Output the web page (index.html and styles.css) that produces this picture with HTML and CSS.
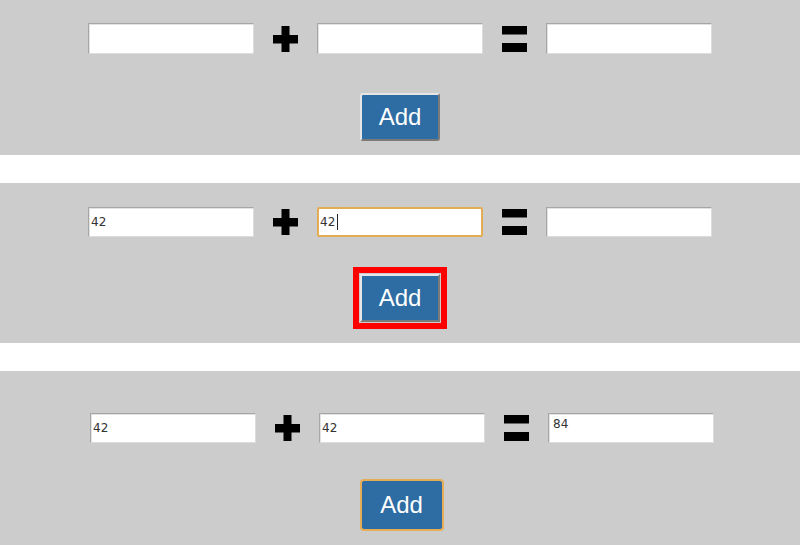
FILE: index.html
```html
<!DOCTYPE html>
<html>
<head>
<meta charset="utf-8">
<link rel="stylesheet" href="styles.css">
</head>
<body>
<div class="page">
  <section class="panel panel-1">
    <div class="row">
      <input class="field" type="text" value="">
      <svg class="op" viewBox="0 0 25 26" width="25" height="26"><path d="M8.5 0h8v9h8.5v8.5h-8.5v8.5h-8v-8.5h-8.5v-8.5h8.5z" fill="#000"/></svg>
      <input class="field" type="text" value="">
      <svg class="op" viewBox="0 0 25 26" width="25" height="26"><rect x="0" y="0" width="25" height="8.5" fill="#000"/><rect x="0" y="17" width="25" height="9" fill="#000"/></svg>
      <input class="field" type="text" value="">
    </div>
    <button class="btn">Add</button>
  </section>

  <section class="panel panel-2">
    <div class="row">
      <input class="field" type="text" value="42">
      <svg class="op" viewBox="0 0 25 26" width="25" height="26"><path d="M8.5 0h8v9h8.5v8.5h-8.5v8.5h-8v-8.5h-8.5v-8.5h8.5z" fill="#000"/></svg>
      <div class="caret-wrap">
        <input class="field focused" type="text" value="42">
        <span class="caret"></span>
      </div>
      <svg class="op" viewBox="0 0 25 26" width="25" height="26"><rect x="0" y="0" width="25" height="8.5" fill="#000"/><rect x="0" y="17" width="25" height="9" fill="#000"/></svg>
      <input class="field" type="text" value="">
    </div>
    <button class="btn btn-alert">Add</button>
  </section>

  <section class="panel panel-3">
    <div class="row">
      <input class="field" type="text" value="42">
      <svg class="op" viewBox="0 0 25 26" width="25" height="26"><path d="M8.5 0h8v9h8.5v8.5h-8.5v8.5h-8v-8.5h-8.5v-8.5h8.5z" fill="#000"/></svg>
      <input class="field" type="text" value="42">
      <svg class="op" viewBox="0 0 25 26" width="25" height="26"><rect x="0" y="0" width="25" height="8.5" fill="#000"/><rect x="0" y="17" width="25" height="9" fill="#000"/></svg>
      <textarea class="field result" rows="1">84</textarea>
    </div>
    <button class="btn btn-focus">Add</button>
  </section>
</div>
</body>
</html>
```

FILE: styles.css
```css
html, body {
  margin: 0;
  padding: 0;
  background: #ffffff;
  overflow: hidden;
}

.page {
  display: flex;
  flex-direction: column;
  gap: 28px;
  width: 800px;
  height: 545px;
}

.panel {
  background: #cccccc;
  display: flex;
  flex-direction: column;
  align-items: center;
}

.panel-1 {
  height: 155px;
  padding-top: 23px;
  box-sizing: border-box;
}

.panel-1 .row {
  height: 31px;
}

.panel-1 .btn {
  margin-top: 39px;
}

.panel-2 {
  height: 160px;
  padding-top: 24px;
  box-sizing: border-box;
}

.panel-2 .btn {
  margin-top: 37px;
}

.panel-3 {
  flex: 1;
  padding-top: 42px;
  box-sizing: border-box;
}

.panel-3 .row {
  padding-left: 4px;
}

.panel-3 .btn {
  margin-top: 38px;
  margin-left: 3px;
}

.row {
  display: flex;
  align-items: center;
  height: 30px;
}

.field {
  width: 166px;
  height: 100%;
  box-sizing: border-box;
  margin: 0;
  padding: 0 2px;
  background: #ffffff;
  border: 1px solid #b4b4b4;
  border-top-color: #a6a6a6;
  border-left-color: #a6a6a6;
  border-bottom-color: #dcdcdc;
  border-right-color: #dcdcdc;
  box-shadow: inset 1px 1px 0 #e2e2e2;
  font-family: "DejaVu Sans", sans-serif;
  font-size: 12px;
  color: #333333;
  outline: none;
}

.field.focused {
  border: 2px solid #e2ac52;
  border-radius: 2px;
  box-shadow: none;
  padding-left: 1px;
}

.result {
  resize: none;
  overflow: hidden;
  padding: 3px 2px 0 4px;
  line-height: 14px;
  display: block;
}

.op {
  display: block;
  margin: 0 19px;
  flex: none;
}

.caret-wrap {
  position: relative;
  height: 100%;
}

.caret {
  position: absolute;
  left: 20px;
  top: 7px;
  width: 1px;
  height: 16px;
  background: #222222;
}

.btn {
  width: 80px;
  height: 48px;
  box-sizing: border-box;
  background: #2e6ca4;
  color: #ffffff;
  font-family: "Liberation Sans", Arial, sans-serif;
  font-size: 24px;
  padding: 0;
  border: 2px solid #7a7a7a;
  border-top-color: #e6e6e6;
  border-left-color: #e6e6e6;
  border-radius: 3px;
  flex: none;
}

.btn-alert {
  outline: 6px solid #ff0000;
  outline-offset: 1px;
  border-radius: 0;
}

.btn-focus {
  border: 1px solid #2e6ca4;
  box-shadow: 0 0 0 2px #e4ad56;
  border-radius: 2px;
}
```
